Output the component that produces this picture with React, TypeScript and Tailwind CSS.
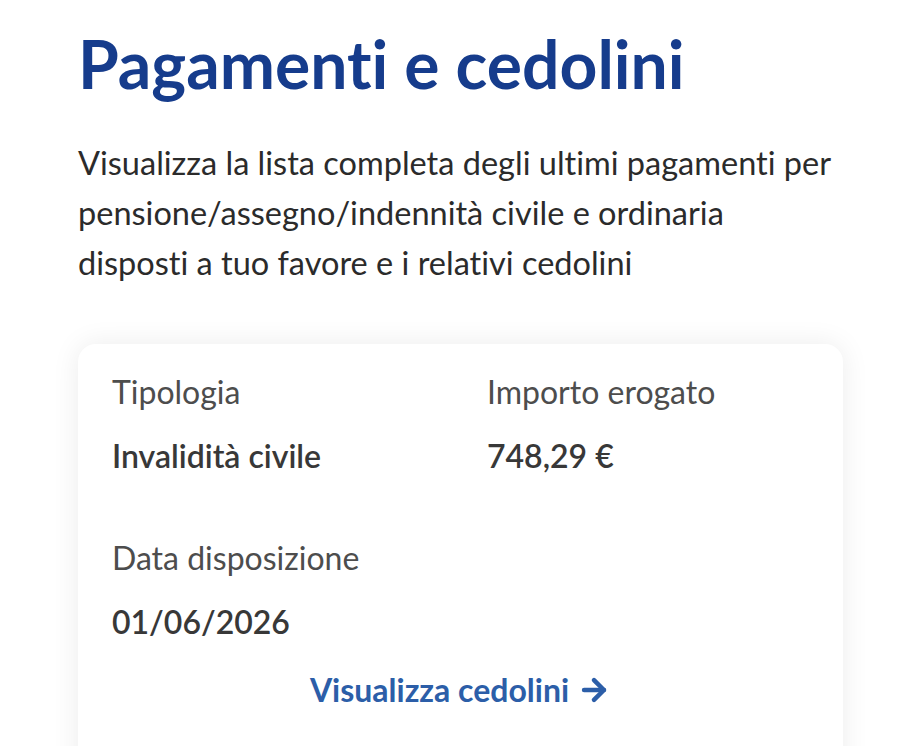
import { ArrowRight } from 'lucide-react';

type Field = { label: string; value: string };

const fields: Field[] = [
  { label: 'Tipologia', value: 'Invalidità civile' },
  { label: 'Importo erogato', value: '748,29 €' },
  { label: 'Data disposizione', value: '01/06/2026' },
];

function InfoField({ label, value }: Field) {
  return (
    <div className="flex flex-col gap-[28px]">
      <span className="text-[32px] leading-[36px] text-[#4d4d4d]">{label}</span>
      <span className="text-[32px] leading-[36px] font-semibold text-[#383838]">{value}</span>
    </div>
  );
}

export default function App() {
  return (
    <div className="h-[746px] overflow-hidden bg-white px-[78px] pt-[26px] font-['Lato',sans-serif] [font-variant-ligatures:none] [font-feature-settings:'liga'_0,'clig'_0,'dlig'_0]">
      <h1 className="text-[66px] leading-[76px] font-bold text-[#163c8c]">Pagamenti e cedolini</h1>
      <p className="mt-[36px] text-[32.5px] leading-[50px] text-[#2b2b2b]">
        Visualizza la lista completa degli ultimi pagamenti per
        <br />
        pensione/assegno/indennità civile e ordinaria
        <br />
        disposti a tuo favore e i relativi cedolini
      </p>
      <div className="mt-[56px] w-[765px] rounded-[18px] bg-white px-[34px] pt-[30px] pb-[80px] shadow-[0_0_28px_rgba(0,0,0,0.08)]">
        <div className="grid grid-cols-[375px_1fr] gap-y-[66px]">
          {fields.map((f) => (
            <InfoField key={f.label} {...f} />
          ))}
        </div>
        <a
          href="#"
          className="mt-[26px] flex items-center justify-center gap-[8px] text-[32px] font-bold text-[#2c5ea8]"
        >
          Visualizza cedolini
          <ArrowRight size={34} strokeWidth={3.2} />
        </a>
      </div>
    </div>
  );
}
